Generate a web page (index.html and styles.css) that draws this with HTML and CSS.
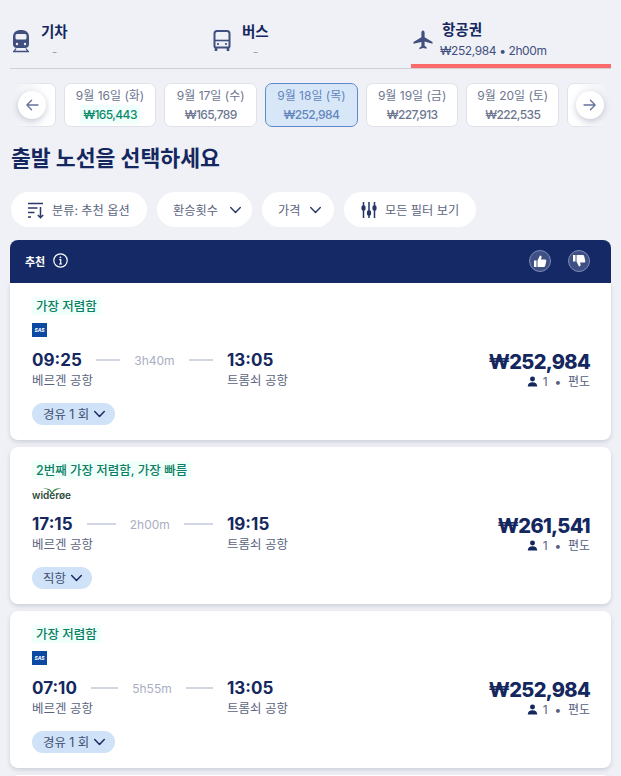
FILE: index.html
```html
<!DOCTYPE html>
<html lang="ko">
<head>
<meta charset="utf-8">
<title>출발 노선</title>
<link rel="stylesheet" href="styles.css">
</head>
<body>
<svg class="defs" width="0" height="0" aria-hidden="true">
  <symbol id="chev" viewBox="0 0 16 10"><path d="M2 2l6 6 6-6" fill="none" stroke="currentColor" stroke-width="1.8" stroke-linecap="round" stroke-linejoin="round"/></symbol>
  <symbol id="person" viewBox="0 0 12 12"><circle cx="6" cy="3.2" r="2.7" fill="currentColor"/><path d="M.8 11.5c0-3 2.2-4.6 5.2-4.6s5.200 1.600 5.200 4.600z" fill="currentColor"/></symbol>
</svg>
<nav class="tabs">
  <div class="tab">
    <svg class="tab-icon" viewBox="0 0 18 24"><path d="M9 1C4 1 1 3.500 1 8v7c0 2.500 1.500 4 4 4h8c2.500 0 4-1.500 4-4V8c0-4.500-3-7-8-7z" fill="#3f4f80"/><rect x="3.500" y="5" width="11" height="5.500" rx="1.500" fill="#f0f1f6"/><circle cx="5" cy="15" r="1.200" fill="#f0f1f6"/><circle cx="13" cy="15" r="1.200" fill="#f0f1f6"/><path d="M1 22.500h16M4 19.500l-2 3M14 19.500l2 3" stroke="#3f4f80" stroke-width="1.300" fill="none"/></svg>
    <div class="tab-text"><b>기차</b><span class="tab-sub center">-</span></div>
  </div>
  <div class="tab">
    <svg class="tab-icon" viewBox="0 0 18 24"><path d="M4 2h10c1.700 0 2.500 1 2.500 2.500V17c0 1-.6 1.500-1.500 1.500H3c-.9 0-1.500-.5-1.500-1.500V4.500C1.500 3 2.300 2 4 2z" fill="none" stroke="#3f4f80" stroke-width="2"/><path d="M2 11.500h14" stroke="#3f4f80" stroke-width="1.600"/><path d="M3 18v4M15 18v4" stroke="#3f4f80" stroke-width="2.600"/><circle cx="5" cy="15" r="1.100" fill="#3f4f80"/><circle cx="13" cy="15" r="1.100" fill="#3f4f80"/></svg>
    <div class="tab-text"><b>버스</b><span class="tab-sub center">-</span></div>
  </div>
  <div class="tab active">
    <svg class="tab-icon plane" viewBox="0 0 20 20"><path d="M10 .5c1 0 1.600 1.300 1.600 2.500v4.300l7.900 4.600v1.900l-7.900-2.300v4.300l2 1.500v1.400L10 18l-3.600 1.200v-1.400l2-1.500v-4.300L.5 13.800v-1.900l7.900-4.600V3C8.400 1.800 9 .5 10 .5z" fill="#3f4f80"/></svg>
    <div class="tab-text"><b>항공권</b><span class="tab-sub wide">₩252,984 • 2h00m</span></div>
  </div>
</nav>

<section class="dates">
  <div class="date-track">
    <div class="date date-cut-left"></div>
    <div class="date"><span>9월 16일 (화)</span><em class="cheap">₩165,443</em></div>
    <div class="date"><span>9월 17일 (수)</span><em>₩165,789</em></div>
    <div class="date selected"><span>9월 18일 (목)</span><em>₩252,984</em></div>
    <div class="date"><span>9월 19일 (금)</span><em>₩227,913</em></div>
    <div class="date"><span>9월 20일 (토)</span><em>₩222,535</em></div>
    <div class="date date-cut-right"></div>
  </div>
  <div class="fade fade-left"></div>
  <div class="fade fade-right"></div>
  <button class="round round-left" aria-label="이전"><svg viewBox="0 0 16 14" width="14" height="12"><path d="M15 7H2M7.500 1.500L2 7l5.500 5.500" fill="none" stroke="#66729c" stroke-width="1.500" stroke-linecap="round" stroke-linejoin="round"/></svg></button>
  <button class="round round-right" aria-label="다음"><svg viewBox="0 0 16 14" width="14" height="12"><path d="M1 7h13M8.500 1.500L14 7l-5.500 5.500" fill="none" stroke="#66729c" stroke-width="1.500" stroke-linecap="round" stroke-linejoin="round"/></svg></button>
</section>

<h1 class="title">출발 노선을 선택하세요</h1>

<div class="filters">
  <button class="filter f-sort">
    <svg width="18" height="18" viewBox="0 0 18 18"><path d="M1 2.500h15M1 7h9.500M1 11.500h6.500M1 16h3M13.500 6v10.500M10.800 14l2.700 2.700 2.700-2.700" fill="none" stroke="#2b3a6b" stroke-width="1.500"/></svg>
    <span>분류: 추천 옵션</span>
  </button>
  <button class="filter f-stops"><span>환승횟수</span><svg class="chev-lg"><use href="#chev"/></svg></button>
  <button class="filter f-price"><span>가격</span><svg class="chev-lg"><use href="#chev"/></svg></button>
  <button class="filter f-all">
    <svg width="16" height="18" viewBox="0 0 16 18"><g stroke="#26356a" stroke-width="1.500" fill="#26356a"><path d="M2.500 1v16M8 1v16M13.500 1v16"/><rect x="1.200" y="5" width="2.600" height="4" rx="1"/><rect x="6.700" y="10" width="2.600" height="4" rx="1"/><rect x="12.200" y="5" width="2.600" height="4" rx="1"/></g></svg>
    <span>모든 필터 보기</span>
  </button>
</div>

<header class="rec">
  <div class="rec-left">
    <b>추천</b>
    <svg width="15" height="15" viewBox="0 0 15 15"><circle cx="7.500" cy="7.500" r="6.700" fill="none" stroke="#fff" stroke-width="1.200"/><path d="M6.300 6.700h1.400v4.200M6 11h3" fill="none" stroke="#fff" stroke-width="1.200"/><circle cx="7.400" cy="4.300" r=".9" fill="#fff"/></svg>
  </div>
  <div class="rec-right">
    <span class="thumb"><svg width="14" height="14" viewBox="0 0 14 14"><path d="M1 6.500h2.500V13H1zM4.500 6.500L7 1.500c1.200 0 1.800.8 1.500 2L8 5.500h4c1 0 1.500.8 1.300 1.600l-1.100 4.700c-.2.800-.7 1.200-1.500 1.200H4.500z" fill="#fff"/></svg></span>
    <span class="thumb"><svg width="14" height="14" viewBox="0 0 14 14"><path d="M1 7.500h2.500V1H1zM4.500 7.500L7 12.500c1.200 0 1.800-.8 1.500-2L8 8.500h4c1 0 1.500-.8 1.300-1.600l-1.100-4.700C12 1.400 11.500 1 10.700 1H4.500z" fill="#fff"/></svg></span>
  </div>
</header>

<article class="card card-first">
  <div class="tag">가장 저렴함</div>
  <div class="logo"><span class="sas">SAS</span></div>
  <div class="trip">
    <div class="legs">
      <div class="route"><strong>09:25</strong><i></i><span class="dur">3h40m</span><i></i></div>
      <div class="arr"><strong>13:05</strong></div>
      <div class="apt">베르겐 공항</div>
      <div class="apt">트롬쇠 공항</div>
    </div>
    <div class="price"><strong>₩252,984</strong><span><svg class="person"><use href="#person"/></svg>1 &nbsp;•&nbsp; 편도</span></div>
  </div>
  <div class="stop">경유 1 회<svg class="chev-sm"><use href="#chev"/></svg></div>
</article>

<article class="card">
  <div class="tag">2번째 가장 저렴함, 가장 빠름</div>
  <div class="logo">
    <span class="wideroe">
      <svg width="26" height="5" viewBox="0 0 26 6"><path d="M2 1c6-.8 9 0 11 4 1.500-3 5-5 11-4.500-4.500.5-8 2.500-10.500 5.500h-1.500C10 2.500 7 1.200 2 1z" fill="#2f7d3c"/></svg>
      <span>widerøe</span>
    </span>
  </div>
  <div class="trip">
    <div class="legs">
      <div class="route"><strong>17:15</strong><i></i><span class="dur">2h00m</span><i></i></div>
      <div class="arr"><strong>19:15</strong></div>
      <div class="apt">베르겐 공항</div>
      <div class="apt">트롬쇠 공항</div>
    </div>
    <div class="price"><strong>₩261,541</strong><span><svg class="person"><use href="#person"/></svg>1 &nbsp;•&nbsp; 편도</span></div>
  </div>
  <div class="stop">직항<svg class="chev-sm"><use href="#chev"/></svg></div>
</article>

<article class="card">
  <div class="tag">가장 저렴함</div>
  <div class="logo"><span class="sas">SAS</span></div>
  <div class="trip">
    <div class="legs">
      <div class="route"><strong>07:10</strong><i></i><span class="dur">5h55m</span><i></i></div>
      <div class="arr"><strong>13:05</strong></div>
      <div class="apt">베르겐 공항</div>
      <div class="apt">트롬쇠 공항</div>
    </div>
    <div class="price"><strong>₩252,984</strong><span><svg class="person"><use href="#person"/></svg>1 &nbsp;•&nbsp; 편도</span></div>
  </div>
  <div class="stop">경유 1 회<svg class="chev-sm"><use href="#chev"/></svg></div>
</article>
<article class="card card-peek"></article>
</body>
</html>
```
FILE: styles.css
```css
* { box-sizing: border-box; }
html, body { margin: 0; height: 776px; overflow: hidden; }
body {
  padding: 0 10px;
  background: #f0f1f6;
  color: #14275f;
  font-family: Inter, "Noto Sans CJK KR", "Noto Sans", sans-serif;
  font-size: 12px;
}
.defs { position: absolute; }

/* tabs */
.tabs {
  display: grid;
  grid-template-columns: 201px 200px 200px;
  height: 69px;
  border-bottom: 1px solid #cfd0d2;
  padding-top: 21px;
}
.tab { display: flex; gap: 11px; align-items: flex-start; padding-left: 2px; color: #14275f; }
.tab-icon { width: 18px; height: 24px; margin-top: 8px; flex: none; }
.tab-text { display: flex; flex-direction: column; width: max-content; }
.tab-text b { font-size: 14.5px; line-height: 22px; font-weight: 700; }
.tab-sub { font-size: 12px; line-height: 18px; color: #3f4f80; margin-top: 1px; letter-spacing: -.4px; }
.tab-sub.wide { margin-left: -2px; }
.tab-sub.center { text-align: center; color: #9aa0b4; margin-top: 0; }
.tab.active { position: relative; padding-left: 2px; gap: 8px; height: 47px; border-bottom: 4px solid #fb6a6a; margin-bottom: -1px; }
.tab.active .tab-text { margin-top: -2px; margin-left: 1px; }
.tab-icon.plane { width: 20px; height: 20px; margin-top: 9px; }

/* date strip */
.dates { position: relative; margin-top: 14px; height: 44px; overflow: hidden; }
.date-track { display: flex; gap: 8px; height: 44px; }
.date {
  flex: none;
  width: 92.7px;
  height: 44px;
  background: #fff;
  border: 1px solid #dfe2ea;
  border-radius: 7px;
  display: flex;
  flex-direction: column;
  align-items: center;
  justify-content: center;
  color: #6d7690;
  font-size: 12px;
  line-height: 19px;
}
.date span { display: block; }
.date em { font-style: normal; display: block; font-weight: 500; letter-spacing: -.6px; }
.date em.cheap { color: #0a8a6a; background: #f0fffb; padding: 0 3px; }
.date.selected { background: #d8e7f8; border-color: #5e8ccb; color: #6286bd; }
.date-cut-left { margin-left: -47px; }
.date-cut-right { margin-right: -60px; }
.fade { position: absolute; top: 0; bottom: 0; width: 36px; }
.fade-left { left: 0; background: linear-gradient(90deg, #f0f1f6 10%, rgba(240,241,246,0)); }
.fade-right { right: 0; background: linear-gradient(270deg, #f0f1f6 10%, rgba(240,241,246,0)); }
.round {
  position: absolute;
  top: 8px;
  width: 28px;
  height: 28px;
  padding: 0;
  border: 0;
  border-radius: 50%;
  background: #fff;
  box-shadow: 0 2px 6px rgba(40,50,90,.25);
  display: flex;
  align-items: center;
  justify-content: center;
}
.round-left { left: 8px; }
.round-right { right: 7px; }

.title { margin: 16px 0 0 1px; font-size: 21.6px; line-height: 30px; font-weight: 700; color: #14275f; }

/* filters */
.filters { display: flex; gap: 10px; margin: 19px 0 0 1px; }
.filter {
  height: 35px;
  border: 0;
  border-radius: 18px;
  background: #fff;
  display: flex;
  align-items: center;
  gap: 7px;
  color: #5b6480;
  font: inherit;
  font-size: 12.2px;
}
.f-sort { width: 136px; padding: 0 0 0 16px; }
.f-stops { width: 95px; gap: 11px; padding: 0 0 0 16px; }
.f-price { width: 72px; gap: 9px; padding: 0 0 0 16px; }
.f-all { width: 132px; gap: 8px; padding: 0 0 0 17px; }
.chev-lg { width: 13px; height: 8px; color: #2b3a6b; }

/* recommended header */
.rec {
  margin-top: 13px;
  height: 43px;
  background: #142966;
  color: #fff;
  border-radius: 8px 8px 0 0;
  display: flex;
  align-items: center;
  justify-content: space-between;
  padding: 0 21px 2px 15px;
}
.rec-left { display: flex; align-items: center; gap: 8px; }
.rec-left b { font-size: 11px; font-weight: 700; }
.rec-right { display: flex; gap: 17px; }
.thumb {
  width: 22px;
  height: 22px;
  border-radius: 50%;
  background: #3f5184;
  border: 1px solid #7c8ab5;
  display: flex;
  align-items: center;
  justify-content: center;
}

/* cards */
.card {
  background: #fff;
  height: 157px;
  margin-bottom: 7px;
  border-radius: 8px;
  padding: 14px 21px 0 22px;
  box-shadow: 0 2px 4px rgba(60,70,110,.2);
  position: relative;
}
.card-first { height: 157px; border-radius: 0 0 8px 8px; }
.tag {
  display: inline-block;
  height: 18px;
  line-height: 19px;
  padding: 0 4px;
  background: #f1fffb;
  color: #0b7f63;
  font-size: 12.5px;
  font-weight: 500;
  vertical-align: top;
  border-radius: 3px;
}
.logo { height: 14px; margin-top: 8px; display: flex; align-items: center; }
.sas {
  width: 15px;
  height: 14px;
  background: #0b4aa2;
  color: #fff;
  font-size: 5px;
  font-weight: 700;
  font-style: italic;
  line-height: 14px;
  text-align: center;
}
.wideroe { position: relative; display: flex; flex-direction: column; align-items: center; width: 37px; margin-left: 1px; color: #2c4a3a; font-size: 10px; font-weight: 600; line-height: 10px; }
.wideroe svg { margin-bottom: -3px; position: relative; flex: none; }
.trip { display: flex; justify-content: space-between; margin-top: 12px; }
.legs { display: grid; grid-template-columns: 195px auto; grid-auto-rows: auto; }
.route { display: flex; align-items: center; gap: 14px; padding-right: 14px; }
.route strong, .arr strong { font-size: 17px; line-height: 22px; font-weight: 700; color: #14275f; }
.route i { flex: 1; height: 2px; background: #d2d6e4; }
.dur { color: #a9aec2; font-size: 12px; }
.apt { color: #5b6480; font-size: 12.5px; line-height: 17px; margin-top: 1px; }
.price { text-align: right; }
.price strong { display: block; font-size: 20px; line-height: 26px; font-weight: 800; letter-spacing: -.7px; color: #14275f; }
.price span { display: flex; justify-content: flex-end; align-items: center; gap: 5px; color: #55607f; line-height: 15px; margin-top: -1px; }
.person { width: 11px; height: 11px; color: #14275f; }
.stop {
  display: inline-flex;
  align-items: center;
  gap: 4px;
  height: 22px;
  margin-top: 14px;
  padding: 0 9px 0 11px;
  background: #cfe2f7;
  border-radius: 11px;
  color: #3f4f74;
  font-size: 12.4px;
}
.chev-sm { width: 13px; height: 8px; color: #14275f; }
.card-peek { height: 30px; }
```
